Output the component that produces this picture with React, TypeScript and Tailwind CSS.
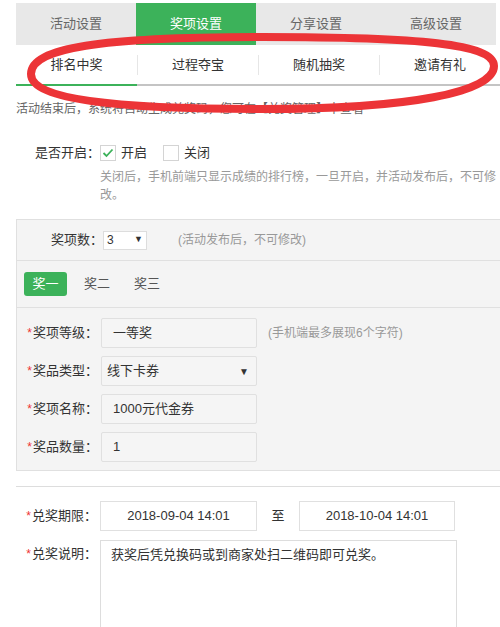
import { ReactNode } from "react"

const topTabs = ["活动设置", "奖项设置", "分享设置", "高级设置"]
const subTabs = ["排名中奖", "过程夺宝", "随机抽奖", "邀请有礼"]

function Label({ children, star = true }: { children: ReactNode; star?: boolean }) {
  return (
    <div className="w-[84px] shrink-0 text-right text-[13px] text-[#333] pr-[3px]">
      {star && <span className="text-[#e33] text-[12px] mr-[1px]">*</span>}
      {children}：
    </div>
  )
}

function GreyInput({ children }: { children: ReactNode }) {
  return (
    <div className="w-[156px] h-[30px] border border-[#e0e0e0] bg-[#f5f5f5] rounded-[2px] flex items-center pl-[11px] text-[13px] text-[#333]">
      {children}
    </div>
  )
}

export default function App() {
  return (
    <div
      className="relative w-[500px] h-[627px] overflow-hidden bg-white"
      style={{ fontFamily: '"Liberation Sans", "Noto Sans CJK SC", sans-serif' }}
    >
      {/* top tabs */}
      <div className="ml-[16px] mt-[3px] w-[480px] h-[42px] flex bg-[#e8e8e8]">
        {topTabs.map((t, i) => (
          <div
            key={t}
            className={`w-[120px] flex items-center justify-center text-[13px] ${
              i === 1 ? "bg-[#3cb25a] text-white" : "text-[#666]"
            }`}
          >
            {t}
          </div>
        ))}
      </div>

      {/* sub tabs */}
      <div className="ml-[16px] w-[484px] h-[41px] flex">
        {subTabs.map((t, i) => (
          <div
            key={t}
            className={`flex-1 flex items-center border-b-2 ${i === 0 ? "border-[#3cb25a]" : "border-[#c4c4c4]"}`}
          >
            {i > 0 && <div className="w-px h-[20px] bg-[#e6e6e6]" />}
            <div className="flex-1 text-center text-[13px] text-[#333]">{t}</div>
          </div>
        ))}
      </div>

      <div className="ml-[16px] mt-[14px] text-[12px] leading-[18px] text-[#666]">
        活动结束后，系统将自动生成兑奖码，您可在【兑奖管理】中查看
      </div>

      {/* 是否开启 */}
      <div className="mt-[27px] flex items-center h-[16px]">
        <div className="w-[100px] pl-[35px] text-[13px] text-[#333]">是否开启：</div>
        <div className="w-[16px] h-[16px] border border-[#d4d4d4] bg-white flex items-center justify-center">
          <svg width="12" height="10" viewBox="0 0 12 10">
            <path d="M1.5 5 L4.5 8 L10.5 1.5" fill="none" stroke="#3cb25a" strokeWidth="1.8" />
          </svg>
        </div>
        <span className="ml-[5px] text-[13px] text-[#333]">开启</span>
        <div className="ml-[16px] w-[16px] h-[16px] border border-[#d4d4d4] bg-white" />
        <span className="ml-[5px] text-[13px] text-[#333]">关闭</span>
      </div>
      <div className="ml-[100px] mt-[7px] w-[400px] text-[12px] leading-[18px] text-[#999]">
        关闭后，手机前端只显示成绩的排行榜，一旦开启，并活动发布后，不可修改。
      </div>

      {/* prize panel */}
      <div className="ml-[16px] mt-[15px] w-[490px] border border-[#e0e0e0] bg-[#f4f4f4]">
        <div className="h-[41px] flex items-center border-b border-[#e0e0e0]">
          <div className="w-[86px] text-right text-[13px] text-[#333]">奖项数：</div>
          <div className="w-[44px] h-[19px] border border-[#ddd] bg-white flex items-center justify-between px-[3px] text-[12px] text-[#333]">
            <span>3</span>
            <span className="text-[9px]">▼</span>
          </div>
          <div className="ml-[31px] text-[12px] text-[#999]">(活动发布后，不可修改)</div>
        </div>
        <div className="h-[47px] flex items-center border-b border-[#e0e0e0] pl-[7px]">
          <div className="w-[43px] h-[24px] rounded-[3px] bg-[#3cb25a] text-white text-[13px] flex items-center justify-center">
            奖一
          </div>
          <div className="ml-[17px] text-[13px] text-[#555]">奖二</div>
          <div className="ml-[24px] text-[13px] text-[#555]">奖三</div>
        </div>
        <div className="pt-[10px] pb-[8px] flex flex-col gap-[8px]">
          <div className="flex items-center">
            <Label>奖项等级</Label>
            <GreyInput>一等奖</GreyInput>
            <div className="ml-[11px] text-[12px] text-[#999]">(手机端最多展现6个字符)</div>
          </div>
          <div className="flex items-center">
            <Label>奖品类型</Label>
            <div className="w-[156px] h-[30px] border border-[#e0e0e0] bg-[#f5f5f5] rounded-[2px] flex items-center justify-between pl-[5px] pr-[7px] text-[13px] text-[#333]">
              <span>线下卡券</span>
              <span className="text-[10px]">▼</span>
            </div>
          </div>
          <div className="flex items-center">
            <Label>奖项名称</Label>
            <GreyInput>1000元代金券</GreyInput>
          </div>
          <div className="flex items-center">
            <Label>奖品数量</Label>
            <GreyInput>1</GreyInput>
          </div>
        </div>
      </div>

      <div className="ml-[16px] mt-[15px] h-px bg-[#dddddd]" />

      <div className="ml-[16px] mt-[14px] flex items-center">
        <Label>兑奖期限</Label>
        <div className="w-[157px] h-[30px] border border-[#e0e0e0] flex items-center justify-center text-[13px] text-[#333]">
          2018-09-04 14:01
        </div>
        <div className="w-[42px] text-center text-[13px] text-[#333]">至</div>
        <div className="w-[156px] h-[30px] border border-[#e0e0e0] flex items-center justify-center text-[13px] text-[#333]">
          2018-10-04 14:01
        </div>
      </div>

      <div className="ml-[16px] mt-[9px] flex items-start">
        <div className="pt-[4px]">
          <Label>兑奖说明</Label>
        </div>
        <div className="w-[357px] h-[120px] border border-[#ddd] pl-[10px] pt-[4px] text-[13px] text-[#333]">
          获奖后凭兑换码或到商家处扫二维码即可兑奖。
        </div>
      </div>

      {/* red annotation ellipse */}
      <svg className="absolute left-0 top-0 pointer-events-none" width="500" height="627">
        <path
          d="M31 74 C31 48 100 37 262 37 C420 37 494 44 494 66 C494 92 410 109 262 109 C120 109 31 100 31 74 Z"
          fill="none"
          stroke="#ec3437"
          strokeWidth="8"
        />
      </svg>
    </div>
  )
}
